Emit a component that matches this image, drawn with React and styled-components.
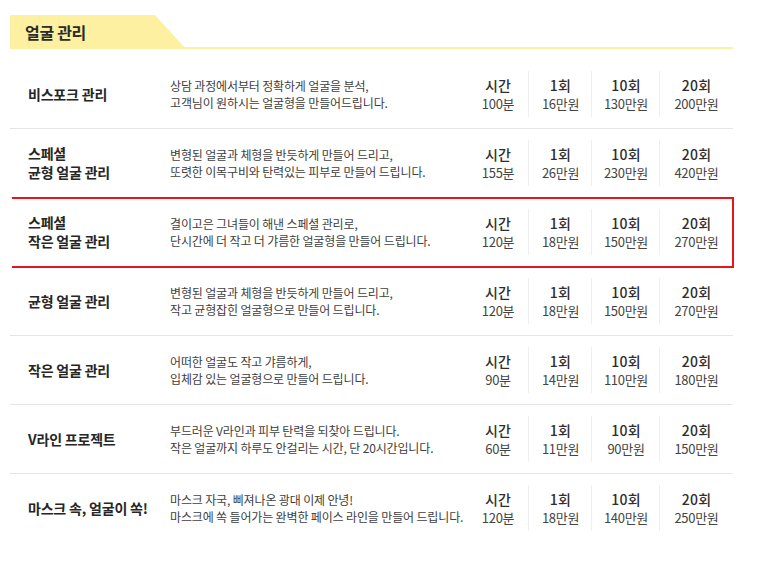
import React from "react";
import styled, { createGlobalStyle } from "styled-components";

const GlobalStyle = createGlobalStyle`
  body {
    margin: 0;
    background: #ffffff;
    font-family: "Noto Sans CJK KR", "Noto Sans", sans-serif;
    color: #333;
  }
`

const Page = styled.div`
  width: 723px;
  padding: 15px 0 0 10px;
`

const HeaderBar = styled.div`
  display: flex;
  height: 34px;
  box-sizing: border-box;
  border-bottom: 2px solid #fcf1a0;
`

const Tab = styled.h2`
  width: 176px;
  height: 34px;
  margin: 0 0 -2px 0;
  padding-left: 15px;
  box-sizing: border-box;
  display: flex;
  align-items: center;
  background: #fdf0a0;
  clip-path: polygon(0 0, 145px 0, 176px 100%, 0 100%);
  font-size: 16px;
  font-weight: 700;
  color: #2b2b2b;
  letter-spacing: -0.3px;
`

const List = styled.div`
  margin-top: 11px;
  display: flex;
  flex-direction: column;
`

const Row = styled.div`
  display: grid;
  grid-template-columns: 160px 297px 62px 63px 68px 73px;
  height: 68px;
  border-bottom: ${props => props.last ? 'none' : '1px solid #e6e6e6'};
  outline: ${props => props.highlight ? '2px solid #e4161e' : 'none'};
  outline-offset: -1px;
  clip-path: ${props => props.highlight ? 'inset(-2px -1px -1px 2px)' : 'none'};
`

const Name = styled.div`
  display: flex;
  align-items: center;
  padding-left: 18px;
  font-size: 14px;
  font-weight: 700;
  line-height: 19px;
  color: #262626;
  letter-spacing: -0.2px;
  white-space: pre-line;
`

const Desc = styled.div`
  display: flex;
  align-items: center;
  font-size: 12px;
  line-height: 17px;
  color: #404040;
  letter-spacing: -0.15px;
  white-space: pre-line;
`

const Price = styled.div`
  align-self: center;
  height: 46px;
  display: flex;
  flex-direction: column;
  align-items: center;
  justify-content: center;
  border-left: ${props => props.first ? 'none' : '1px solid #efefef'};
  margin-left: ${props => props.first ? '0' : '-1px'};
`

const PriceHead = styled.span`
  font-size: 14px;
  font-weight: 500;
  line-height: 19px;
  color: #2e2e2e;
  letter-spacing: 0.2px;
`

const PriceValue = styled.span`
  font-size: 13px;
  line-height: 18px;
  color: #444;
  letter-spacing: -0.3px;
`

const rows = [
  { name: '비스포크 관리', desc: '상담 과정에서부터 정확하게 얼굴을 분석,\n고객님이 원하시는 얼굴형을 만들어드립니다.', p: ['100분', '16만원', '130만원', '200만원'] },
  { name: '스페셜\n균형 얼굴 관리', desc: '변형된 얼굴과 체형을 반듯하게 만들어 드리고,\n또렷한 이목구비와 탄력있는 피부로  만들어 드립니다.', p: ['155분', '26만원', '230만원', '420만원'] },
  { name: '스페셜\n작은 얼굴 관리', desc: '결이고은 그녀들이 해낸 스페셜 관리로,\n단시간에 더 작고 더 갸름한 얼굴형을 만들어 드립니다.', p: ['120분', '18만원', '150만원', '270만원'], highlight: true },
  { name: '균형 얼굴 관리', desc: '변형된 얼굴과 체형을 반듯하게 만들어 드리고,\n작고 균형잡힌 얼굴형으로 만들어 드립니다.', p: ['120분', '18만원', '150만원', '270만원'] },
  { name: '작은 얼굴 관리', desc: '어떠한 얼굴도 작고 갸름하게,\n입체감 있는 얼굴형으로 만들어 드립니다.', p: ['90분', '14만원', '110만원', '180만원'] },
  { name: 'V라인 프로젝트', desc: '부드러운 V라인과 피부 탄력을 되찾아 드립니다.\n작은 얼굴까지 하루도 안걸리는 시간, 단 20시간입니다.', p: ['60분', '11만원', '90만원', '150만원'] },
  { name: '마스크 속, 얼굴이 쏙!', desc: '마스크 자국, 삐져나온 광대 이제 안녕!\n마스크에 쏙 들어가는 완벽한 페이스 라인을 만들어 드립니다.', p: ['120분', '18만원', '140만원', '250만원'] },
]

const heads = ['시간', '1회', '10회', '20회']

export default function App() {
  return (
    <Page>
      <GlobalStyle />
      <HeaderBar>
        <Tab>얼굴 관리</Tab>
      </HeaderBar>
      <List>
        {rows.map((row, i) => (
          <Row key={i} highlight={row.highlight} last={i === rows.length - 1}>
            <Name>{row.name}</Name>
            <Desc>{row.desc}</Desc>
            {row.p.map((value, j) => (
              <Price key={j} first={j === 0}>
                <PriceHead>{heads[j]}</PriceHead>
                <PriceValue>{value}</PriceValue>
              </Price>
            ))}
          </Row>
        ))}
      </List>
    </Page>
  )
}
